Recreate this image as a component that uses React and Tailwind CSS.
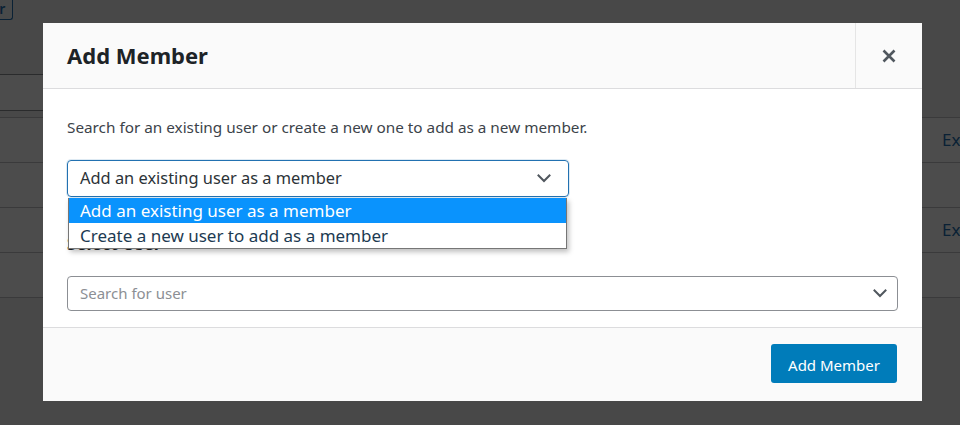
import React from "react";

const font = { fontFamily: '"Noto Sans", "Open Sans", sans-serif' };

function Chevron({ className = "" }) {
  return (
    <svg className={className} width="14" height="9" viewBox="0 0 14 9" fill="none">
      <path d="M1.5 1.5 L7 7 L12.5 1.5" stroke="#50575e" strokeWidth="2" strokeLinecap="square" strokeLinejoin="miter" />
    </svg>
  );
}

function CloseIcon() {
  return (
    <svg width="14" height="14" viewBox="0 0 14 14" fill="none">
      <path d="M1.5 1.5 L12.5 12.5 M12.5 1.5 L1.5 12.5" stroke="#50575e" strokeWidth="2.6" strokeLinecap="butt" />
    </svg>
  );
}

function Page() {
  return (
    <div className="flex h-[425px] w-[960px] flex-col overflow-hidden bg-[#f0f0f1]">
      <div className="flex h-[74px] items-start">
        <div className="-ml-[39px] flex h-[20px] items-center rounded-b-[3px] border border-t-0 border-[#2271b1] bg-[#f6f7f7] pb-[2px] pl-2 pr-[7px] text-[14px] font-semibold text-[#2271b1]">
          Filter
        </div>
      </div>
      <div className="h-[37px] w-[300px] border border-l-0 border-[#8c8f94] bg-white"></div>
      <div className="mt-[6px] flex flex-col border-t border-[#c3c4c7]">
        {[true, false, true, false].map((ex, i) => (
          <div key={i} className="flex h-[45px] items-center justify-end border-b border-[#c3c4c7] bg-white">
            {ex && <span className="-mr-[30px] w-[48px] text-[17px] text-[#2271b1]">Export</span>}
          </div>
        ))}
      </div>
    </div>
  );
}

export default function App() {
  return (
    <div className="relative h-[425px] w-[960px] overflow-hidden" style={font}>
      <Page />
      <div className="absolute inset-0 bg-black/70"></div>
      <div className="absolute left-[43px] top-[23px] flex w-[879px] flex-col bg-white">
        <div className="flex h-[66px] border-b border-[#dcdcde] bg-[#fafafa]">
          <div className="flex flex-1 items-center pl-6 text-[22px] font-bold text-[#1d2327]">Add Member</div>
          <div className="flex w-[67px] items-center justify-center border-l border-[#e5e5e5]">
            <CloseIcon />
          </div>
        </div>
        <div className="relative flex flex-col px-6 pb-4 pt-[26px]">
          <p className="text-[15.3px] leading-6 text-[#3c434a]">
            Search for an existing user or create a new one to add as a new member.
          </p>
          <div className="mt-[21px] flex h-[37px] w-[502px] items-center justify-between rounded-[4px] border border-[#2271b1] pl-3 pr-[17px] text-[16.4px] text-[#2c3338] shadow-[0_0_0_1px_rgba(34,113,177,0.15)]">
            <span>Add an existing user as a member</span>
            <Chevron />
          </div>
          <div className="mt-[36px] text-[17px] font-bold leading-[22px] text-[#1d2327]">Select User</div>
          <div className="mt-[21px] flex h-[35px] items-center justify-between rounded-[4px] border border-[#8c8f94] pl-3 pr-[10px] text-[15px] text-[#8c8f94]">
            <span>Search for user</span>
            <Chevron />
          </div>
          <div className="absolute left-[25px] top-[109px] flex w-[499px] flex-col border border-t-0 border-[#767676] bg-white text-[17px] shadow-[2px_3px_5px_rgba(0,0,0,0.25)]">
            <div className="flex h-[25px] items-center bg-[#0a93fd] pl-[11px] text-white">Add an existing user as a member</div>
            <div className="flex h-[25px] items-center pl-[11px] text-[#1c3a52]">Create a new user to add as a member</div>
          </div>
        </div>
        <div className="flex justify-end border-t border-[#dcdcde] bg-[#fafafa] pb-[18px] pr-[25px] pt-4">
          <div className="flex h-[39px] w-[126px] items-center justify-center rounded-[3px] bg-[#007cba] pt-[3px] text-[15px] text-white">
            Add Member
          </div>
        </div>
      </div>
    </div>
  );
}
